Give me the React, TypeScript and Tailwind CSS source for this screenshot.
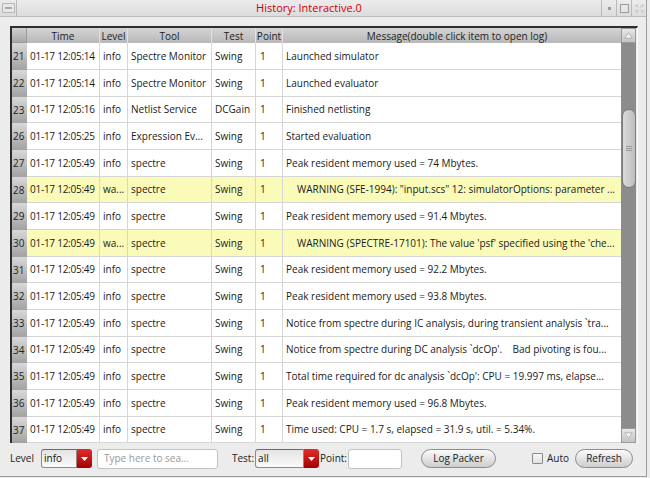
import React from "react";

type Row = {
  n: number;
  time: string;
  level: string;
  tool: string;
  test: string;
  msg: string;
  warn?: boolean;
};

const rows: Row[] = [
  { n: 21, time: "01-17 12:05:14", level: "info", tool: "Spectre Monitor", test: "Swing", msg: "Launched simulator" },
  { n: 22, time: "01-17 12:05:14", level: "info", tool: "Spectre Monitor", test: "Swing", msg: "Launched evaluator" },
  { n: 23, time: "01-17 12:05:16", level: "info", tool: "Netlist Service", test: "DCGain", msg: "Finished netlisting" },
  { n: 26, time: "01-17 12:05:25", level: "info", tool: "Expression Ev...", test: "Swing", msg: "Started evaluation" },
  { n: 27, time: "01-17 12:05:49", level: "info", tool: "spectre", test: "Swing", msg: "Peak resident memory used = 74 Mbytes." },
  { n: 28, time: "01-17 12:05:49", level: "wa...", tool: "spectre", test: "Swing", msg: "WARNING (SFE-1994): \"input.scs\" 12: simulatorOptions: parameter ...", warn: true },
  { n: 29, time: "01-17 12:05:49", level: "info", tool: "spectre", test: "Swing", msg: "Peak resident memory used = 91.4 Mbytes." },
  { n: 30, time: "01-17 12:05:49", level: "wa...", tool: "spectre", test: "Swing", msg: "WARNING (SPECTRE-17101): The value 'psf' specified using the 'che...", warn: true },
  { n: 31, time: "01-17 12:05:49", level: "info", tool: "spectre", test: "Swing", msg: "Peak resident memory used = 92.2 Mbytes." },
  { n: 32, time: "01-17 12:05:49", level: "info", tool: "spectre", test: "Swing", msg: "Peak resident memory used = 93.8 Mbytes." },
  { n: 33, time: "01-17 12:05:49", level: "info", tool: "spectre", test: "Swing", msg: "Notice from spectre during IC analysis, during transient analysis `tra..." },
  { n: 34, time: "01-17 12:05:49", level: "info", tool: "spectre", test: "Swing", msg: "Notice from spectre during DC analysis `dcOp'.    Bad pivoting is fou..." },
  { n: 35, time: "01-17 12:05:49", level: "info", tool: "spectre", test: "Swing", msg: "Total time required for dc analysis `dcOp': CPU = 19.997 ms, elapse..." },
  { n: 36, time: "01-17 12:05:49", level: "info", tool: "spectre", test: "Swing", msg: "Peak resident memory used = 96.8 Mbytes." },
  { n: 37, time: "01-17 12:05:49", level: "info", tool: "spectre", test: "Swing", msg: "Time used: CPU = 1.7 s, elapsed = 31.9 s, util. = 5.34%." },
];

const cols = "grid grid-cols-[15px_73px_28px_84px_44px_27px_338px]";

function Combo({ value, className }: { value: string; className: string }) {
  return (
    <div className={`flex h-[19px] ${className}`}>
      <div className="flex flex-1 items-center rounded-l-[3px] border border-[#8a8a8a] border-t-[#6a6a6a] bg-gradient-to-b from-[#e4e4e4] to-[#fafafa] pl-[2px] text-[10px] text-[#111]">
        {value}
      </div>
      <div className="flex w-[15px] items-center justify-center rounded-r-[3px] bg-gradient-to-b from-[#e42a2a] to-[#a30000]">
        <svg width="7" height="4" viewBox="0 0 7 4">
          <path d="M0 0h7L3.5 4z" fill="#fff" />
        </svg>
      </div>
    </div>
  );
}

function ArrowBtn({ up }: { up?: boolean }) {
  return (
    <div className="flex h-[15px] items-center justify-center border border-[#9a9a9a] bg-gradient-to-b from-[#e8e8e8] to-[#c4c4c4]">
      <svg width="9" height="7" viewBox="0 0 9 7">
        <path d={up ? "M4.5 0.8L8.2 6.2H0.8z" : "M0.8 0.8H8.2L4.5 6.2z"} fill="#f4f4f4" stroke="#a8a8a8" strokeWidth="0.8" />
      </svg>
    </div>
  );
}

export default function App() {
  return (
    <div className="relative h-[478px] w-[650px] overflow-hidden bg-[#ececec] font-['Open_Sans',sans-serif]">
      <div className="flex h-[477px] w-[647px] flex-col border-b border-r border-[#9c9c9c]">
        {/* title bar */}
        <div className="flex h-[17px] items-stretch border-b border-[#bcbcbc] bg-gradient-to-b from-[#ececec] to-[#dcdcdc]">
          <div className="flex w-[17px] items-center justify-center border-r border-[#b8b8b8]">
            <div className="flex h-[10px] w-[13px] items-center justify-center rounded-[1px] border border-[#b4b4b4] bg-[#e8e8e8]">
              <div className="h-[2px] w-[7px] bg-[#a8a8a8]" />
            </div>
          </div>
          <div className="flex flex-1 items-center justify-center text-[11px] text-[#d20000]">
            History: Interactive.0
          </div>
          <div className="flex w-[15px] items-center justify-center border-l border-[#b8b8b8]">
            <div className="h-[3px] w-[3px] bg-[#9a9a9a]" />
          </div>
          <div className="flex w-[15px] items-center justify-center border-l border-[#b8b8b8]">
            <div className="h-[9px] w-[9px] border border-[#9a9a9a] bg-[#e6e6e6]" />
          </div>
          <div className="flex w-[15px] items-center justify-center border-l border-[#b8b8b8]">
            <svg width="9" height="9" viewBox="0 0 9 9" fill="none" stroke="#c4c4c4" strokeWidth="1">
              <path d="M1 1l2.5 2.5M8 1L5.5 3.5M1 8l2.5-2.5M8 8L5.5 5.5M1 1h2M1 1v2M8 1H6M8 1v2M1 8h2M1 8V6M8 8H6M8 8V6" />
            </svg>
          </div>
        </div>

        {/* table */}
        <div className="ml-[10px] mt-[9px] flex w-[628px] border-l-2 border-r border-t-2 border-[#2e2e2e] border-r-[#fafafa]">
          <div className="flex flex-col">
            <div className={`${cols} h-[15px] bg-gradient-to-b from-[#d4d4d4] to-[#b8b8b8] text-[10px] text-[#222]`}>
              <div className="border-b border-r border-[#9a9a9a] bg-gradient-to-b from-[#cfcfcf] to-[#a8a8a8]" />
              {["Time", "Level", "Tool", "Test", "Point"].map((h) => (
                <div key={h} className="flex items-center justify-center border-r border-[#e2e2e2] leading-none">
                  {h}
                </div>
              ))}
              <div className="flex items-center justify-center pl-[10px] leading-none">Message(double click item to open log)</div>
            </div>
            {rows.map((r, i) => (
              <div
                key={r.n}
                className={`${cols} ${i % 3 === 2 ? "h-[26px]" : "h-[27px]"} ${r.warn ? "bg-[#fafab9]" : "bg-white"} text-[10px] text-[#1a1a1a]`}
              >
                <div className="flex items-center bg-gradient-to-b from-[#d8d8d8] to-[#a2a2a2] pl-[1px] text-[#222]">{r.n}</div>
                <div className="flex items-center truncate border-b border-r border-[#d6d6d6] pl-[3px] tracking-[-0.25px]">{r.time}</div>
                <div className="flex items-center truncate border-b border-r border-[#d6d6d6] pl-[3px]">{r.level}</div>
                <div className="flex items-center truncate border-b border-r border-[#d6d6d6] pl-[3px]">{r.tool}</div>
                <div className="flex items-center truncate border-b border-r border-[#d6d6d6] pl-[3px]">{r.test}</div>
                <div className="flex items-center truncate border-b border-r border-[#d6d6d6] pl-[4px]">1</div>
                <div className={`flex items-center whitespace-pre border-b border-[#d6d6d6] ${r.warn ? "pl-[14px]" : "pl-[3px]"}`}>{r.msg}</div>
              </div>
            ))}
          </div>

          {/* scrollbar */}
          <div className="flex w-[15px] flex-col bg-[#8c8c8c]">
            <ArrowBtn up />
            <div className="flex flex-1 flex-col items-center">
              <div className="mt-[66px] flex h-[79px] w-[14px] flex-col items-center justify-center gap-[1px] rounded-full border border-[#7a7a7a] bg-gradient-to-r from-[#dadada] to-[#bebebe]">
                <div className="h-[1px] w-[6px] bg-[#9a9a9a]" />
                <div className="h-[1px] w-[6px] bg-[#9a9a9a]" />
                <div className="h-[1px] w-[6px] bg-[#9a9a9a]" />
              </div>
            </div>
            <ArrowBtn />
          </div>
        </div>

        {/* bottom bar */}
        <div className="flex flex-1 items-center pb-[2px] pl-[10px] text-[10px] text-[#222]">
          <span>Level</span>
          <Combo value="info" className="ml-[7px] w-[51px]" />
          <div className="ml-[5px] flex h-[20px] w-[121px] items-center rounded-[3px] border border-[#c2c2c2] bg-white pl-[6px] text-[#9a9a9a]">
            Type here to sea...
          </div>
          <span className="ml-[14px]">Test:</span>
          <Combo value="all" className="ml-[1px] w-[64px]" />
          <span className="ml-[1px]">Point:</span>
          <div className="ml-[1px] h-[20px] w-[54px] rounded-[3px] border border-[#c2c2c2] bg-white" />
          <button className="ml-[19px] h-[19px] w-[75px] rounded-full border border-[#8c8c8c] bg-gradient-to-b from-[#fbfbfb] to-[#cdcdcd] text-[10px] text-[#222]">
            Log Packer
          </button>
          <div className="ml-[36px] h-[11px] w-[11px] rounded-[1px] border border-[#8a8a8a] bg-gradient-to-b from-[#f6f6f6] to-[#e2e2e2]" />
          <span className="ml-[4px]">Auto</span>
          <button className="ml-[6px] h-[19px] w-[58px] rounded-full border border-[#8c8c8c] bg-gradient-to-b from-[#fbfbfb] to-[#cdcdcd] text-[10px] text-[#222]">
            Refresh
          </button>
        </div>
      </div>
    </div>
  );
}
